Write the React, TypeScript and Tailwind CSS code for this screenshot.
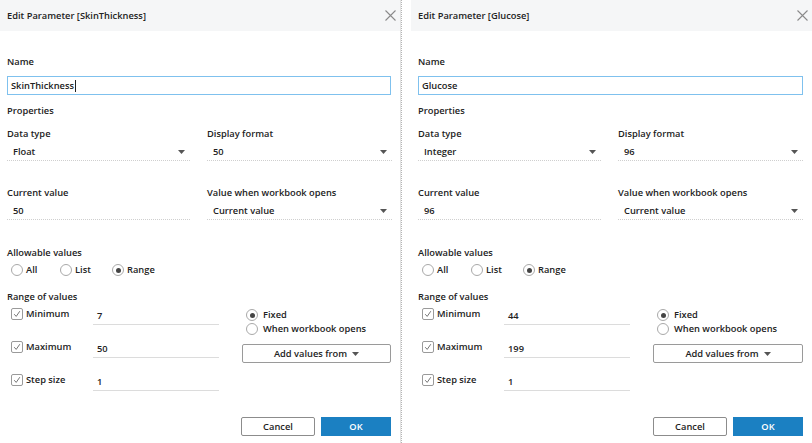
interface DialogProps {
  name: string;
  dataType: string;
  displayFormat: string;
  current: string;
  min: string;
  max: string;
  step: string;
  className?: string;
}

function Caret() {
  return (
    <svg width="7" height="4" viewBox="0 0 7 4" className="shrink-0">
      <path d="M0 0h7L3.5 4z" fill="#555" />
    </svg>
  );
}

function Radio({ checked }: { checked?: boolean }) {
  return (
    <span className="w-[12px] h-[12px] rounded-full border border-[#a9a9a9] bg-white flex items-center justify-center shrink-0">
      {checked && <span className="w-[5px] h-[5px] rounded-full bg-[#444]" />}
    </span>
  );
}

function Check() {
  return (
    <span className="w-[12px] h-[12px] rounded-[2px] border border-[#9a9a9a] bg-white flex items-center justify-center shrink-0">
      <svg width="8" height="8" viewBox="0 0 8 8">
        <path d="M1.2 4.2l2 2.2L6.8 1.2" fill="none" stroke="#777" strokeWidth="1" />
      </svg>
    </span>
  );
}

function Field({ label, value, dropdown }: { label: string; value: string; dropdown?: boolean }) {
  return (
    <div className="flex flex-col">
      <div className="h-[14px] leading-[14px]">{label}</div>
      <div className="mt-[2px] h-[18px] flex items-center justify-between pl-[6px] pr-[5px] border-b border-dotted border-[#cfcfcf]">
        <span>{value}</span>
        {dropdown && <Caret />}
      </div>
    </div>
  );
}

function RangeRow({ label, value }: { label: string; value: string }) {
  return (
    <div className="flex items-start h-[19px]">
      <div className="w-[86px] flex items-center gap-[3px] pl-[4px] h-[16px]">
        <Check />
        <span>{label}</span>
      </div>
      <div className="w-[126px] h-[19px] flex items-center pl-[4px] border-b border-[#dcdcdc] pt-[2px]">{value}</div>
    </div>
  );
}

function EditParameter({ name, dataType, displayFormat, current, min, max, step, className }: DialogProps) {
  return (
    <div className={`h-[443px] flex flex-col bg-white ${className ?? ''}`}>
      {/* header */}
      <div className="h-[31px] bg-[#f5f6f7] flex items-center justify-between pr-[4px]">
        <span className="pl-[7px]">Edit Parameter [{name}]</span>
        <svg width="11" height="11" viewBox="0 0 11 11">
          <path d="M0.5 0.5l10 10M10.5 0.5l-10 10" stroke="#8a8a8a" strokeWidth="1.1" />
        </svg>
      </div>

      <div className="flex flex-col flex-1 pl-[7px] pr-[9px]">
        <div className="mt-[24px] h-[14px] leading-[14px]">Name</div>
        <div className="mt-[7px] h-[19px] border border-[#7fc1ee] flex items-center pl-[3px]">
          {name}
          {name === 'SkinThickness' && <span className="w-px h-[12px] bg-[#222] ml-px" />}
        </div>

        <div className="mt-[9px] h-[14px] leading-[14px]">Properties</div>

        <div className="mt-[9px] grid grid-cols-[183px_185px] gap-x-[17px]">
          <Field label="Data type" value={dataType} dropdown />
          <Field label="Display format" value={displayFormat} dropdown />
        </div>
        <div className="mt-[25px] grid grid-cols-[183px_185px] gap-x-[17px]">
          <Field label="Current value" value={current} />
          <Field label="Value when workbook opens" value="Current value" dropdown />
        </div>

        <div className="mt-[26px] h-[14px] leading-[14px]">Allowable values</div>
        <div className="mt-[3px] h-[14px] flex items-center pl-[4px]">
          <div className="w-[49px] flex items-center gap-[3px]">
            <Radio />
            <span>All</span>
          </div>
          <div className="w-[52px] flex items-center gap-[3px]">
            <Radio />
            <span>List</span>
          </div>
          <div className="flex items-center gap-[3px]">
            <Radio checked />
            <span>Range</span>
          </div>
        </div>

        <div className="mt-[13px] h-[14px] leading-[14px]">Range of values</div>
        <div className="mt-[2px] flex">
          <div className="flex flex-col gap-[14px]">
            <RangeRow label="Minimum" value={min} />
            <RangeRow label="Maximum" value={max} />
            <RangeRow label="Step size" value={step} />
          </div>
          <div className="ml-[23px] w-[150px] flex flex-col">
            <div className="pl-[4px] mt-[2px] h-[14px] flex items-center gap-[5px]">
              <Radio checked />
              <span>Fixed</span>
            </div>
            <div className="pl-[4px] h-[14px] flex items-center gap-[5px]">
              <Radio />
              <span>When workbook opens</span>
            </div>
            <div className="mt-[8px] h-[19px] border border-[#9a9a9a] rounded-[2px] flex items-center justify-center gap-[5px]">
              <span>Add values from</span>
              <Caret />
            </div>
          </div>
        </div>

        <div className="mt-auto mb-[7px] flex justify-end gap-[6px]">
          <div className="w-[74px] h-[19px] border border-[#8c8c8c] rounded-[2px] flex items-center justify-center">Cancel</div>
          <div className="w-[70px] h-[19px] bg-[#1b80c2] text-white flex items-center justify-center">OK</div>
        </div>
      </div>
    </div>
  );
}

export default function App() {
  return (
    <div
      className="w-[812px] h-[443px] flex bg-white text-[9.3px] font-semibold text-[#222] overflow-hidden"
      style={{ fontFamily: '"Open Sans", "Noto Sans", sans-serif' }}
    >
      <EditParameter
        className="w-[401px] border-r border-[#e2e2e2]"
        name="SkinThickness"
        dataType="Float"
        displayFormat="50"
        current="50"
        min="7"
        max="50"
        step="1"
      />
      <div className="w-[4px] border-l border-dotted border-[#b5b5b5]" />
      <EditParameter
        className="flex-1 pl-[6px]"
        name="Glucose"
        dataType="Integer"
        displayFormat="96"
        current="96"
        min="44"
        max="199"
        step="1"
      />
    </div>
  );
}
